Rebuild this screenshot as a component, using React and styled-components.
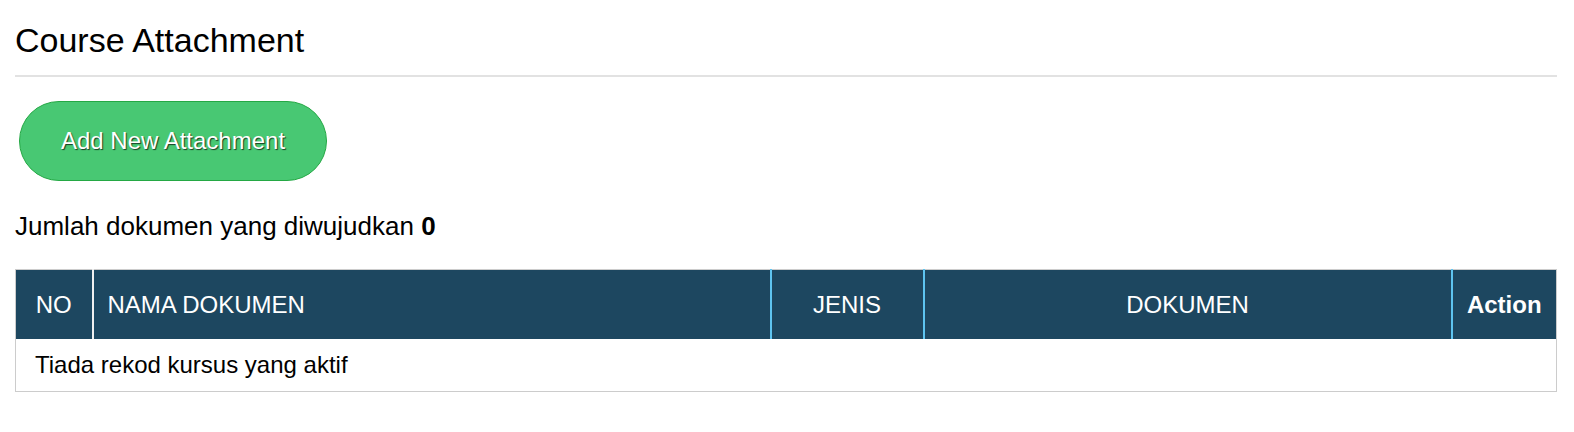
import React from "react";
import styled, { createGlobalStyle } from "styled-components";

const GlobalStyle = createGlobalStyle`
  html, body {
    margin: 0;
    padding: 0;
    background: #fff;
  }
  body {
    font-family: "Liberation Sans", Arial, Helvetica, sans-serif;
    color: #111;
  }
`;

const columns = [
  { key: "no", label: "NO", width: 77, align: "center" },
  { key: "nama", label: "NAMA DOKUMEN", width: 678, align: "left" },
  { key: "jenis", label: "JENIS", width: 153, align: "center" },
  { key: "dokumen", label: "DOKUMEN", width: 528, align: "center" },
  { key: "action", label: "Action", width: 105, align: "center", bold: true },
];

export default function App() {
  const total = 0;

  return (
    <Page>
      <GlobalStyle />
      <Title>Course Attachment</Title>
      <Divider />
      <AddButton type="button">Add New Attachment</AddButton>
      <Summary>
        Jumlah dokumen yang diwujudkan <strong>{total}</strong>
      </Summary>
      <Table>
        <colgroup>
          {columns.map((c) => (
            <col key={c.key} style={{ width: c.width }} />
          ))}
        </colgroup>
        <thead>
          <tr>
            {columns.map((c, i) => (
              <HeadCell
                key={c.key}
                $align={c.align}
                $bold={c.bold}
                $light={i === 1}
              >
                {c.label}
              </HeadCell>
            ))}
          </tr>
        </thead>
        <tbody>
          <tr>
            <EmptyCell colSpan={columns.length}>
              Tiada rekod kursus yang aktif
            </EmptyCell>
          </tr>
        </tbody>
      </Table>
    </Page>
  );
}

const Page = styled.div`
  padding: 20px 17px 40px 15px;
`;

const Title = styled.h1`
  margin: 0;
  font-size: 34px;
  line-height: 40px;
  font-weight: 400;
  color: #000;
`;

const Divider = styled.hr`
  margin: 15px 0 0;
  border: 0;
  height: 2px;
  background: #e2e2e2;
`;

const AddButton = styled.button`
  display: block;
  margin: 24px 0 0 4px;
  width: 308px;
  height: 80px;
  border-radius: 40px;
  border: 1px solid #24a844;
  background: #48c873;
  color: #fff;
  font-family: "Liberation Sans", Arial, sans-serif;
  font-size: 24px;
  text-shadow: 1px 1px 1px rgba(0, 0, 0, 0.7);
  cursor: pointer;
`;

const Summary = styled.p`
  margin: 30px 0 0;
  font-size: 26px;
  line-height: 30px;
  color: #000;

  strong {
    font-weight: 700;
  }
`;

const Table = styled.table`
  margin-top: 28px;
  width: 100%;
  border-collapse: collapse;
  table-layout: fixed;
  border: 1px solid #cccccc;
  font-size: 24px;
`;

const HeadCell = styled.th`
  height: 69px;
  padding: 0 14px;
  background: #1d4760;
  color: #fff;
  font-weight: ${(p) => (p.$bold ? 700 : 400)};
  text-align: ${(p) => p.$align};
  border-left: 2px solid ${(p) => (p.$light ? "#f0f0f0" : "#5ec4f0")};
  white-space: nowrap;

  &:first-child {
    border-left: 1px solid #cccccc;
    padding: 0;
  }
`;

const EmptyCell = styled.td`
  height: 52px;
  padding: 0 19px;
  color: #000;
  background: #fff;
`;
